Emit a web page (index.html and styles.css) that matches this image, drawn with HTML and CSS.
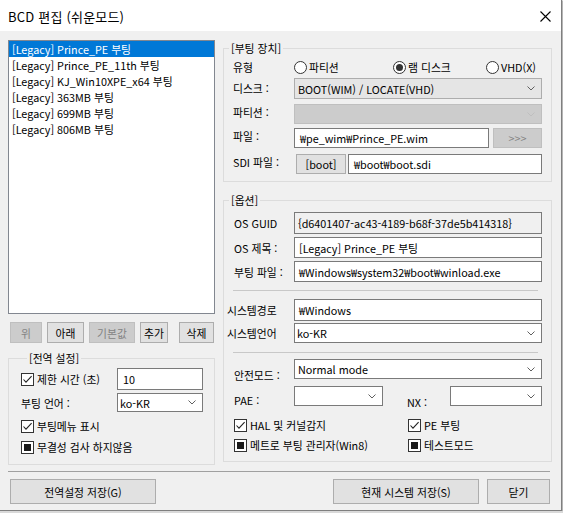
FILE: index.html
```html
<!DOCTYPE html>
<html lang="ko">
<head>
<meta charset="utf-8">
<title>BCD 편집 (쉬운모드)</title>
<link rel="stylesheet" href="styles.css">
</head>
<body>
<div class="window">
  <div class="titlebar">
    <span class="title">BCD 편집 (쉬운모드)</span>
    <svg class="close" width="11" height="11" viewBox="0 0 11 11"><path d="M0.5 0.5L10.5 10.5M10.5 0.5L0.5 10.5" stroke="#000" stroke-width="1.1" fill="none"/></svg>
  </div>

  <div class="main">
    <div class="leftcol">
      <div class="listbox">
        <div class="item sel">[Legacy] Prince_PE 부팅</div>
        <div class="item">[Legacy] Prince_PE_11th 부팅</div>
        <div class="item">[Legacy] KJ_Win10XPE_x64 부팅</div>
        <div class="item">[Legacy] 363MB 부팅</div>
        <div class="item">[Legacy] 699MB 부팅</div>
        <div class="item">[Legacy] 806MB 부팅</div>
      </div>
      <div class="listbtns">
        <span class="btn dis b-up">위</span>
        <span class="btn b-down">아래</span>
        <span class="btn dis b-def">기본값</span>
        <span class="btn b-add">추가</span>
        <span class="btn b-del">삭제</span>
      </div>
      <fieldset class="group g-global">
        <legend>[전역 설정]</legend>
        <div class="grow gr1">
          <span class="chk"><span class="cb"><svg width="11" height="11" viewBox="0 0 11 11"><path d="M1.5 5.5L4 8.2L9.6 2.2" stroke="#222" stroke-width="1.1" fill="none"/></svg></span>제한 시간 (초)</span>
          <span class="edit">10</span>
        </div>
        <div class="grow gr2">
          <span class="lbl">부팅 언어 :</span>
          <span class="combo"><span class="ctext">ko-KR</span><svg class="chev" width="8" height="5" viewBox="0 0 8 5"><path d="M0.5 0.5L4 4L7.5 0.5" stroke="#606060" fill="none"/></svg></span>
        </div>
        <div class="crow gr3">
          <span class="chk"><span class="cb"><svg width="11" height="11" viewBox="0 0 11 11"><path d="M1.5 5.5L4 8.2L9.6 2.2" stroke="#222" stroke-width="1.1" fill="none"/></svg></span>부팅메뉴 표시</span>
        </div>
        <div class="crow gr4">
          <span class="chk"><span class="cb ind"></span>무결성 검사 하지않음</span>
        </div>
      </fieldset>
    </div>

    <div class="rightcol">
      <fieldset class="group g-boot">
        <legend>[부팅 장치]</legend>
        <div class="frow r-type">
          <span class="lbl">유형</span>
          <div class="radios">
            <span class="rad"><span class="rb"></span>파티션</span>
            <span class="rad"><span class="rb on"></span>램 디스크</span>
            <span class="rad"><span class="rb"></span>VHD(X)</span>
          </div>
        </div>
        <div class="frow r-disk">
          <span class="lbl low1">디스크 :</span>
          <span class="combo gray"><span class="ctext">BOOT(WIM) / LOCATE(VHD)</span><svg class="chev" width="8" height="5" viewBox="0 0 8 5"><path d="M0.5 0.5L4 4L7.5 0.5" stroke="#606060" fill="none"/></svg></span>
        </div>
        <div class="frow r-part">
          <span class="lbl">파티션 :</span>
          <span class="combo disabled"><span class="ctext"></span><svg class="chev" width="8" height="5" viewBox="0 0 8 5"><path d="M0.5 0.5L4 4L7.5 0.5" stroke="#bfbfbf" fill="none"/></svg></span>
        </div>
        <div class="frow r-file">
          <span class="lbl">파일 :</span>
          <div class="filebox">
            <span class="edit">₩pe_wim₩Prince_PE.wim</span>
            <span class="btn dis b-more">&gt;&gt;&gt;</span>
          </div>
        </div>
        <div class="frow r-sdi">
          <span class="lbl">SDI 파일 :</span>
          <div class="sdibox">
            <span class="btn b-boot">[boot]</span>
            <span class="edit">₩boot₩boot.sdi</span>
          </div>
        </div>
      </fieldset>

      <fieldset class="group g-opt">
        <legend>[옵션]</legend>
        <div class="frow o-guid">
          <span class="lbl">OS GUID</span>
          <span class="edit ro">{d6401407-ac43-4189-b68f-37de5b414318}</span>
        </div>
        <div class="frow o-title">
          <span class="lbl">OS 제목 :</span>
          <span class="edit">[Legacy] Prince_PE 부팅</span>
        </div>
        <div class="frow o-file">
          <span class="lbl">부팅 파일 :</span>
          <span class="edit">₩Windows₩system32₩boot₩winload.exe</span>
        </div>
        <div class="sep s1"></div>
        <div class="frow o-path">
          <span class="lbl near">시스템경로</span>
          <span class="edit">₩Windows</span>
        </div>
        <div class="frow o-lang">
          <span class="lbl near">시스템언어</span>
          <span class="combo"><span class="ctext">ko-KR</span><svg class="chev" width="8" height="5" viewBox="0 0 8 5"><path d="M0.5 0.5L4 4L7.5 0.5" stroke="#606060" fill="none"/></svg></span>
        </div>
        <div class="sep s2"></div>
        <div class="frow o-safe">
          <span class="lbl low6">안전모드 :</span>
          <span class="combo"><span class="ctext">Normal mode</span><svg class="chev" width="8" height="5" viewBox="0 0 8 5"><path d="M0.5 0.5L4 4L7.5 0.5" stroke="#606060" fill="none"/></svg></span>
        </div>
        <div class="frow o-pae">
          <span class="lbl low4">PAE :</span>
          <div class="paebox">
            <span class="combo c-pae"><span class="ctext"></span><svg class="chev" width="8" height="5" viewBox="0 0 8 5"><path d="M0.5 0.5L4 4L7.5 0.5" stroke="#606060" fill="none"/></svg></span>
            <span class="lbl nx low4">NX :</span>
            <span class="combo c-nx"><span class="ctext"></span><svg class="chev" width="8" height="5" viewBox="0 0 8 5"><path d="M0.5 0.5L4 4L7.5 0.5" stroke="#606060" fill="none"/></svg></span>
          </div>
        </div>
        <div class="chkgrid c1">
          <span class="chk"><span class="cb"><svg width="11" height="11" viewBox="0 0 11 11"><path d="M1.5 5.5L4 8.2L9.6 2.2" stroke="#222" stroke-width="1.1" fill="none"/></svg></span>HAL 및 커널감지</span>
          <span class="chk"><span class="cb"><svg width="11" height="11" viewBox="0 0 11 11"><path d="M1.5 5.5L4 8.2L9.6 2.2" stroke="#222" stroke-width="1.1" fill="none"/></svg></span>PE 부팅</span>
        </div>
        <div class="chkgrid c2">
          <span class="chk"><span class="cb ind"></span>메트로 부팅 관리자(Win8)</span>
          <span class="chk"><span class="cb ind"></span>테스트모드</span>
        </div>
      </fieldset>
    </div>
  </div>

  <div class="bottom">
    <div class="bsep"></div>
    <div class="bbtns">
      <span class="btn big b-global">전역설정 저장(G)</span>
      <span class="btn big b-save">현재 시스템 저장(S)</span>
      <span class="btn big b-close">닫기</span>
    </div>
  </div>
</div>
</body>
</html>
```

FILE: styles.css
```css
* { box-sizing: border-box; }

html { background: #d9d9d9; }

body {
  margin: 0;
  font-family: "Noto Sans CJK KR", "Noto Sans", sans-serif;
  font-size: 10.8px;
  line-height: 16px;
  color: #000;
}

.window {
  width: 562px;
  height: 511px;
  background: #f0f0f0;
  border-right: 1px solid #7f7f7f;
  border-bottom: 1px solid #7f7f7f;
  box-shadow: 1px 1px 0 #b5b5b5;
  display: flex;
  flex-direction: column;
}

/* title bar */
.titlebar {
  height: 31px;
  background: #fff;
  display: flex;
  align-items: center;
  justify-content: space-between;
  padding: 2px 10px 0 8px;
}
.title { white-space: nowrap; font-size: 13px; letter-spacing: 0.2px; }
.close { display: block; }

/* main layout */
.main {
  display: grid;
  grid-template-columns: 207px 329px;
  column-gap: 8px;
  padding: 9px 9px 0 8px;
  align-items: start;
}

/* list */
.listbox {
  height: 274px;
  background: #fff;
  border: 1px solid #828790;
}
.item {
  height: 16px;
  line-height: 16px;
  padding-left: 3px;
  white-space: nowrap;
}
.item.sel { background: #0078d7; color: #fff; }

.listbtns {
  display: flex;
  margin-top: 8px;
  height: 21px;
}

/* buttons */
.btn {
  display: flex;
  align-items: center;
  justify-content: center;
  height: 21px;
  background: #e1e1e1;
  border: 1px solid #adadad;
  white-space: nowrap;
}
.btn.dis { background: #cccccc; border-color: #bfbfbf; color: #838383; }

.b-up { margin-left: 2px; width: 32px; }
.b-down { margin-left: 5px; width: 37px; }
.b-def { margin-left: 5px; width: 46px; }
.b-add { margin-left: 5px; width: 28px; }
.b-del { margin-left: 11px; width: 35px; }

/* groups */
.group {
  margin: 0;
  padding: 0;
  border: 1px solid #dcdcdc;
  min-width: 0;
}
.group legend {
  padding: 0 2px;
  line-height: 16px;
  margin-left: 5px;
}
.g-global legend { margin-left: 6px; }

.g-global {
  margin-top: 7px;
  padding: 2px 0 7px 12px;
}
.grow {
  display: grid;
  grid-template-columns: 96px 86px;
  align-items: center;
}
.gr1 { height: 22px; }
.gr1 .edit { height: 22px; }
.gr2 { height: 19px; margin-top: 3px; }
.gr2 .combo { height: 19px; }
.crow { height: 20px; display: flex; align-items: center; }
.gr3 { margin-top: 4px; }
.gr4 { margin-top: 1px; }

/* checkboxes */
.chk {
  display: flex;
  align-items: center;
  white-space: nowrap;
}
.cb {
  width: 13px;
  height: 13px;
  border: 1px solid #333;
  background: #fff;
  margin-right: 3px;
  flex: none;
  display: flex;
  align-items: center;
  justify-content: center;
}
.cb svg { display: block; }
.cb.ind::after {
  content: "";
  width: 7px;
  height: 7px;
  background: #1a1a1a;
}

/* radios */
.radios {
  display: grid;
  grid-template-columns: 99px 93px auto;
  align-items: center;
}
.rad { display: flex; align-items: center; white-space: nowrap; }
.rb {
  width: 13px;
  height: 13px;
  border: 1px solid #333;
  border-radius: 50%;
  background: #fff;
  margin-right: 2px;
  display: flex;
  align-items: center;
  justify-content: center;
  flex: none;
}
.rb.on::after {
  content: "";
  width: 7px;
  height: 7px;
  border-radius: 50%;
  background: #333;
}

/* edits & combos */
.edit {
  display: flex;
  align-items: center;
  background: #fff;
  border: 1px solid #7a7a7a;
  padding-left: 4px;
  white-space: nowrap;
  overflow: hidden;
  height: 100%;
}
.edit.ro { background: #f0f0f0; padding-left: 3px; }
.gr1 .edit { padding-left: 5px; }

.combo {
  display: flex;
  align-items: center;
  justify-content: space-between;
  background: #fff;
  border: 1px solid #7a7a7a;
  padding: 0 6px 0 2px;
  height: 100%;
  white-space: nowrap;
}
.combo.gray { background: #e5e5e5; border-color: #adadad; padding-left: 3px; }
.combo.disabled { background: #cccccc; border-color: #bfbfbf; }
.chev { display: block; flex: none; }

/* right column forms */
.frow {
  display: grid;
  grid-template-columns: 70px 248px;
  align-items: center;
}
.frow .lbl { margin-left: 9px; white-space: nowrap; }
.g-opt .frow .lbl { margin-left: 10px; }
.g-opt .frow .lbl.near { margin-left: 3px; }
.lbl.low1 { padding-top: 2px; }
.lbl.low4 { padding-top: 8px; }
.lbl.low6 { padding-top: 12px; }

.g-boot { padding: 1px 9px 7px 0; }
.r-type { height: 20px; margin-top: 0; }
.r-disk { height: 21px; margin-top: 1px; }
.r-part { height: 20px; margin-top: 5px; }
.r-file { height: 20px; margin-top: 4px; }
.r-sdi { height: 20px; margin-top: 6px; }
.r-disk > *, .r-part > *, .r-file > *, .r-sdi > * { height: 100%; }

.filebox {
  display: grid;
  grid-template-columns: 195px 49px;
  column-gap: 4px;
  height: 100%;
}
.filebox .edit { padding-left: 5px; }
.filebox .btn { height: 100%; }
.sdibox {
  display: grid;
  grid-template-columns: 50px 194px;
  column-gap: 2px;
  margin-left: 2px;
  height: 100%;
}
.sdibox .btn { height: 100%; }
.sdibox .edit { padding-left: 5px; }

.g-opt {
  margin-top: 10px;
  padding: 4px 9px 7px 0;
}
.o-guid { height: 22px; grid-template-rows: 22px; }
.o-title { height: 21px; margin-top: 3px; grid-template-rows: 21px; }
.o-file { height: 21px; margin-top: 3px; grid-template-rows: 21px; }
.o-path { height: 22px; margin-top: 8px; grid-template-rows: 22px; }
.o-lang { height: 20px; margin-top: 2px; grid-template-rows: 20px; }
.o-safe { height: 20px; margin-top: 6px; grid-template-rows: 20px; }
.o-pae { height: 20px; margin-top: 7px; grid-template-rows: 20px; }
.o-lang .combo { padding-left: 2px; }
.o-safe .combo { padding-left: 3px; }

.sep {
  height: 1px;
  background: #c8c8c8;
  margin-left: 9px;
  margin-right: 4px;
}
.s1 { margin-top: 8px; }
.s2 { margin-top: 9px; }

.paebox {
  display: flex;
  height: 20px;
}
.c-pae { width: 89px; }
.paebox .lbl.nx { width: 43px; margin-left: 24px; }
.c-nx { width: 92px; }

.chkgrid {
  display: grid;
  grid-template-columns: 174px auto;
  padding-left: 10px;
  height: 18px;
  align-items: center;
}
.c1 { margin-top: 10px; }
.c2 { margin-top: 2px; }

/* bottom */
.bottom {
  padding: 0 11px 0 8px;
}
.bsep {
  height: 1px;
  background: #a0a0a0;
  margin-top: 6px;
}
.bbtns {
  display: flex;
  margin-top: 7px;
}
.btn.big { height: 25px; }
.b-global { width: 146px; margin-left: 2px; }
.b-save { width: 146px; margin-left: auto; }
.b-close { width: 63px; margin-left: 8px; }
```
